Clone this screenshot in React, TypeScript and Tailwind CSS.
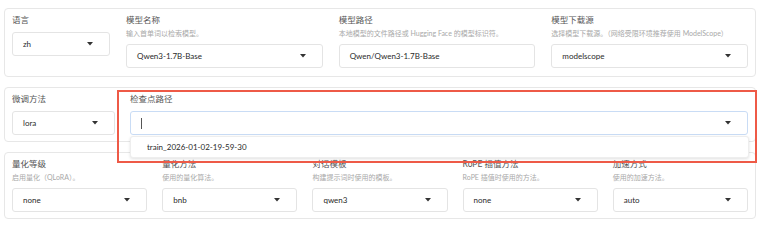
import React from "react";

const font = "font-['Lato','Noto_Sans_CJK_SC',sans-serif]";

function Arrow() {
  return (
    <svg width="6" height="4" viewBox="0 0 6 4" className="shrink-0">
      <polygon points="0,0 6,0 3,3.5" fill="#333" />
    </svg>
  );
}

function Label({ text }: { text: string }) {
  return <p className="h-[12px] text-[8.5px] leading-[12px] text-[#555]">{text}</p>;
}

function Info({ text }: { text: string }) {
  return <p className="mt-[2px] h-[10px] text-[7px] leading-[10px] text-[#a8a8a8] whitespace-nowrap">{text}</p>;
}

function Select({ value, arrow = true }: { value: string; arrow?: boolean }) {
  return (
    <div className="flex h-[24px] items-center justify-between rounded-[3px] border border-[#e4e4e4] bg-white pl-[10px] pr-[16px]">
      <span className="text-[8px] text-[#2a2a2a]">{value}</span>
      {arrow && <Arrow />}
    </div>
  );
}

type Field = { label: string; info?: string; value: string; arrow?: boolean; width?: string };

function FieldBox({ field }: { field: Field }) {
  return (
    <div className={field.width ? `${field.width} shrink-0` : "min-w-0 flex-1"}>
      <Label text={field.label} />
      {field.info && <Info text={field.info} />}
      <div className="mt-[6px]">
        <Select value={field.value} arrow={field.arrow !== false} />
      </div>
    </div>
  );
}

const row1: Field[] = [
  { label: "语言", value: "zh", width: "w-[98px]" },
  { label: "模型名称", info: "输入首单词以检索模型。", value: "Qwen3-1.7B-Base" },
  {
    label: "模型路径",
    info: "本地模型的文件路径或 Hugging Face 的模型标识符。",
    value: "Qwen/Qwen3-1.7B-Base",
    arrow: false,
  },
  { label: "模型下载源", info: "选择模型下载源。（网络受限环境推荐使用 ModelScope）", value: "modelscope" },
];

const row3: Field[] = [
  { label: "量化等级", info: "启用量化（QLoRA）。", value: "none" },
  { label: "量化方法", info: "使用的量化算法。", value: "bnb" },
  { label: "对话模板", info: "构建提示词时使用的模板。", value: "qwen3" },
  { label: "RoPE 插值方法", info: "RoPE 插值时使用的方法。", value: "none" },
  { label: "加速方式", info: "使用的加速方法。", value: "auto" },
];

export default function App() {
  return (
    <div className={`relative h-[226px] w-[760px] overflow-hidden bg-white ${font}`}>
      <div className="flex flex-col gap-[10px] px-[4px] pt-[8px]">
        <div className="flex items-start gap-[16px] rounded-[4px] border border-[#e7e7e7] px-[7px] pb-[8px] pt-[5px]">
          {row1.map((f) => (
            <FieldBox key={f.label} field={f} />
          ))}
        </div>

        <div className="relative z-10 flex items-start gap-[15px] rounded-[4px] border border-[#e7e7e7] px-[7px] pb-[6px] pt-[5px]">
          <FieldBox field={{ label: "微调方法", value: "lora", width: "w-[103px]" }} />
          <div className="min-w-0 flex-1">
            <Label text="检查点路径" />
            <div className="relative mt-[6px]">
              <div className="flex h-[24px] items-center justify-between rounded-[3px] border border-[#c9dcf5] bg-white pl-[10px] pr-[16px]">
                <span className="h-[11px] w-px bg-[#555]" />
                <Arrow />
              </div>
              <div className="absolute left-0 right-[-1px] top-full mt-px flex h-[22px] items-center rounded-[3px] border border-[#eeeeee] bg-white pl-[16px] shadow-[0_1px_3px_rgba(0,0,0,0.12)]">
                <span className="text-[8px] text-[#2a2a2a]">train_2026-01-02-19-59-30</span>
              </div>
            </div>
          </div>
        </div>

        <div className="flex items-start gap-[15px] rounded-[4px] border border-[#e7e7e7] px-[7px] pb-[6px] pt-[5px]">
          {row3.map((f) => (
            <FieldBox key={f.label} field={f} />
          ))}
        </div>
      </div>

      <div className="pointer-events-none absolute left-[117px] top-[90px] z-20 h-[73px] w-[640px] border-2 border-[#ee5a47]" />
    </div>
  );
}
